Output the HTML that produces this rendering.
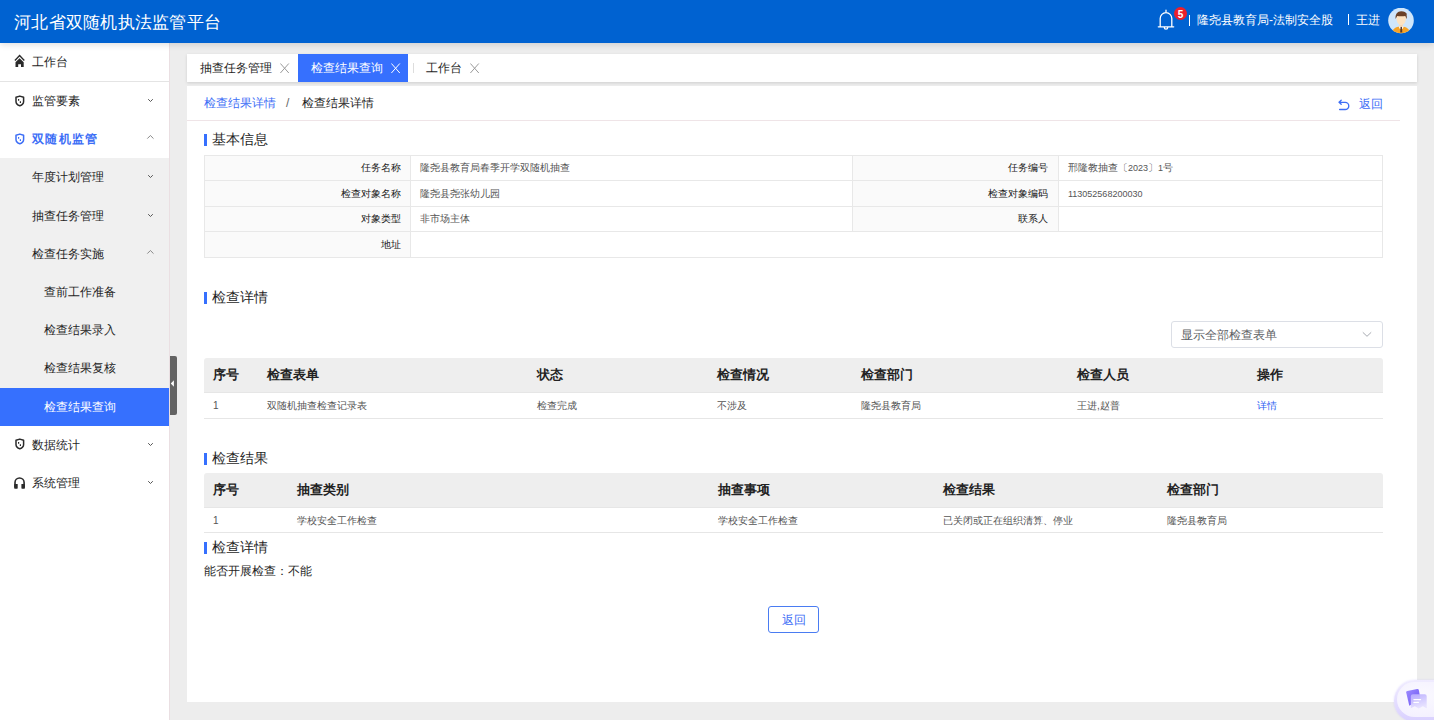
<!DOCTYPE html>
<html><head><meta charset="utf-8">
<style>
*{box-sizing:border-box;margin:0;padding:0}
html,body{width:1434px;height:720px;overflow:hidden;background:#ededed;font-family:"Liberation Sans",sans-serif;color:#333}
.a{position:absolute;white-space:nowrap}
#hdr{position:absolute;left:0;top:0;width:1434px;height:43px;background:#0062d1;color:#fff;z-index:5;box-shadow:0 2px 6px rgba(0,0,0,.12)}
#hdr .title{left:14px;top:13px;font-size:17px;line-height:20px;letter-spacing:0.26px}
#hdr .t12{font-size:12px;line-height:16px;top:12px}
#side{position:absolute;left:0;top:43px;width:170px;height:677px;background:#fff;border-right:1px solid #eadfe2}
.mi{position:absolute;left:0;width:169px;height:38.25px;font-size:12px;color:#1f1f1f}
.mi .t{position:absolute;left:32px;top:11px;line-height:16px;white-space:nowrap}
.mi.sub{background:#f0f0f0}
.mi.sub2 .t{left:44px}
.mi.act{background:#3670fe;color:#fff}
.chev{position:absolute;left:147px;top:16px}
.ico{position:absolute;left:14px;top:13px}
#tabs{position:absolute;left:187px;top:54px;width:1230px;height:28px;background:#fff;box-shadow:0 1px 3px rgba(0,0,0,.13)}
.tab{position:absolute;top:0;height:28px;font-size:12px;color:#1f1f1f}
.tab .t{position:absolute;top:6px;line-height:16px;white-space:nowrap}
.tab .x{position:absolute;top:9px}
#card{position:absolute;left:187px;top:86px;width:1230px;height:616px;background:#fff}
.sec{position:absolute;font-size:14px;line-height:18px;white-space:nowrap;color:#1f1f1f}
.sec i{position:absolute;left:-8px;top:4px;width:3px;height:12px;background:#3670fe}
.kv{position:absolute;left:204px;top:155px;width:1179px;height:103px;border:1px solid #e8e8e8;background:#fff}
.kv .row{position:absolute;left:0;width:1177px;border-top:1px solid #e8e8e8}
.kv .lb{position:absolute;top:0;height:100%;background:#fafafa;border-right:1px solid #e8e8e8}
.kv .txt{position:absolute;font-size:10px;line-height:12px;white-space:nowrap}
.grid{position:absolute;left:204px;width:1179px}
.grid .hd{position:absolute;left:0;top:0;width:1179px;height:34.5px;background:#eeeeee;border-radius:3px 3px 0 0;border-bottom:1px solid #e6e6e6}
.grid .hd span{position:absolute;top:9px;font-size:13px;line-height:16px;font-weight:bold;color:#222;white-space:nowrap}
.grid .bd{position:absolute;left:0;top:34.5px;width:1179px;height:26px;border-bottom:1px solid #e6e6e6}
.grid .bd span{position:absolute;top:7px;font-size:10px;line-height:12px;color:#555;white-space:nowrap}
.kt{font-size:10px;line-height:12px}
.dg{font-size:9px}
.kt.lb{color:#1a1a1a}.kt.vl{color:#555}
</style></head><body>
<div id="hdr">
  <div class="a title">河北省双随机执法监管平台</div>
  <svg class="a" style="left:1157px;top:9px" width="18" height="22" viewBox="0 0 18 22"><path d="M9 1.2v1.6M3.2 17.5V9.5a5.8 5.8 0 0 1 11.6 0v8M1.3 17.8h15.4M7.3 18.5a1.7 1.7 0 0 0 3.4 0" fill="none" stroke="#fff" stroke-width="1.3" stroke-linecap="round"/></svg>
  <div class="a" style="left:1174px;top:7px;width:13px;height:13px;border-radius:50%;background:#ec1f2b;color:#fff;font-size:10px;line-height:15px;text-align:center;font-weight:bold">5</div>
  <div class="a" style="left:1189px;top:15px;width:1px;height:11px;background:#fff"></div>
  <div class="a t12" style="left:1197px">隆尧县教育局-法制安全股</div>
  <div class="a" style="left:1348px;top:14px;width:1px;height:11px;background:#fff"></div>
  <div class="a t12" style="left:1356px">王进</div>
  <svg class="a" style="left:1388px;top:8px" width="26" height="26" viewBox="0 0 26 26"><defs><clipPath id="cp"><circle cx="13" cy="12.5" r="12.8"/></clipPath></defs><circle cx="13" cy="12.5" r="12.8" fill="#cfe6fb"/><g clip-path="url(#cp)"><path d="M3.8 26C4 21 7.5 18.4 13 18.4S22 21 22.2 26Z" fill="#f6a326"/><path d="M10.6 18.2H15.8L14.6 21H11.8Z" fill="#fff"/><path d="M12.5 18.8H14L14.3 24.5H12.2Z" fill="#5b3a29"/><rect x="11.4" y="15" width="3.4" height="3.6" fill="#f8d6b0"/><path d="M8.6 10.5C8.6 6.5 10.5 5.8 13.2 5.8S17.9 6.5 17.9 10.5C17.9 14.6 15.8 17 13.2 17S8.6 14.6 8.6 10.5Z" fill="#fde3c1"/><path d="M7.6 11C7 6 9.5 3.2 13.2 3.2C16.2 3.2 18 4.3 19.1 6.2C18.6 6.3 18.4 6.5 18.6 7.2C19 8.6 18.8 10 18.4 11C18 9.5 17.7 8.5 17.3 7.9C15 8.4 11.5 8.4 9.2 7.9C8.6 8.8 8.2 10 7.6 11Z" fill="#6b4126"/></g></svg>
</div>

<div id="side">
  <div class="mi" style="top:0;height:39px;border-bottom:1px solid #e4e4e4"><svg class="a" style="left:14px;top:11px" width="12" height="14" viewBox="0 0 12 14"><path d="M0.9 6.4L5.6 1.6L10.3 6.4" fill="none" stroke="#2a2a2a" stroke-width="1.4"/><path d="M1.5 8.2L5.6 4.2L9.7 8.2V13H7V10.3H4.2V13H1.5Z" fill="#2a2a2a"/></svg><span class="t">工作台</span></div>
  <div class="mi" style="top:39.00px"><svg class="a" style="left:15px;top:12.5px" width="10" height="12" viewBox="0 0 10 12"><path d="M1 2.3L4.8 1.1L8.6 2.3V6.4C8.6 8.7 6.8 10 4.8 10.7C2.8 10 1 8.7 1 6.4Z" fill="none" stroke="#2a2a2a" stroke-width="1.5" stroke-linejoin="round"/><path d="M3.6 4v1.7M5.4 6.2v1.8" stroke="#2a2a2a" stroke-width="1.2"/></svg><span class="t">监管要素</span><svg class="a" style="left:147px;top:16px" width="8" height="5" viewBox="0 0 8 5"><path d="M1.2 1.2L3.5 3.5L5.8 1.2" fill="none" stroke="#555" stroke-width="1"/></svg></div>
  <div class="mi" style="top:77.20px;color:#3d6ef6;font-weight:bold;letter-spacing:1.35px"><svg class="a" style="left:15px;top:12.5px" width="10" height="12" viewBox="0 0 10 12"><path d="M1 2.3L4.8 1.1L8.6 2.3V6.4C8.6 8.7 6.8 10 4.8 10.7C2.8 10 1 8.7 1 6.4Z" fill="none" stroke="#3d6ef6" stroke-width="1.5" stroke-linejoin="round"/><path d="M3.6 4v1.7M5.4 6.2v1.8" stroke="#3d6ef6" stroke-width="1.2"/></svg><span class="t">双随机监管</span><svg class="a" style="left:146px;top:14px" width="10" height="6" viewBox="0 0 10 6"><path d="M1.3 4.6L4.4 1.5L7.5 4.6" fill="none" stroke="#888" stroke-width="1"/></svg></div>
  <div class="mi sub" style="top:115.40px"><span class="t">年度计划管理</span><svg class="a" style="left:147px;top:16px" width="8" height="5" viewBox="0 0 8 5"><path d="M1.2 1.2L3.5 3.5L5.8 1.2" fill="none" stroke="#555" stroke-width="1"/></svg></div>
  <div class="mi sub" style="top:153.60px"><span class="t">抽查任务管理</span><svg class="a" style="left:147px;top:16px" width="8" height="5" viewBox="0 0 8 5"><path d="M1.2 1.2L3.5 3.5L5.8 1.2" fill="none" stroke="#555" stroke-width="1"/></svg></div>
  <div class="mi sub" style="top:191.80px"><span class="t">检查任务实施</span><svg class="a" style="left:146px;top:14px" width="10" height="6" viewBox="0 0 10 6"><path d="M1.3 4.6L4.4 1.5L7.5 4.6" fill="none" stroke="#888" stroke-width="1"/></svg></div>
  <div class="mi sub sub2" style="top:230.00px"><span class="t">查前工作准备</span></div>
  <div class="mi sub sub2" style="top:268.20px"><span class="t">检查结果录入</span></div>
  <div class="mi sub sub2" style="top:306.40px"><span class="t">检查结果复核</span></div>
  <div class="mi sub2 act" style="top:344.60px"><span class="t">检查结果查询</span></div>
  <div class="mi" style="top:382.80px"><svg class="a" style="left:15px;top:12.5px" width="10" height="12" viewBox="0 0 10 12"><path d="M1 2.3L4.8 1.1L8.6 2.3V6.4C8.6 8.7 6.8 10 4.8 10.7C2.8 10 1 8.7 1 6.4Z" fill="none" stroke="#2a2a2a" stroke-width="1.5" stroke-linejoin="round"/><path d="M3.6 4v1.7M5.4 6.2v1.8" stroke="#2a2a2a" stroke-width="1.2"/></svg><span class="t">数据统计</span><svg class="a" style="left:147px;top:16px" width="8" height="5" viewBox="0 0 8 5"><path d="M1.2 1.2L3.5 3.5L5.8 1.2" fill="none" stroke="#555" stroke-width="1"/></svg></div>
  <div class="mi" style="top:421.00px"><svg class="a" style="left:14px;top:12px" width="12" height="14" viewBox="0 0 12 14"><path d="M1 11.5V6.6A4.55 4.55 0 0 1 10.1 6.6V11.5" fill="none" stroke="#2a2a2a" stroke-width="1.6"/><rect x="0.2" y="8" width="3.5" height="4.7" rx="0.6" fill="#2a2a2a"/><rect x="7.4" y="8" width="3.5" height="4.7" rx="0.6" fill="#2a2a2a"/></svg><span class="t">系统管理</span><svg class="a" style="left:147px;top:16px" width="8" height="5" viewBox="0 0 8 5"><path d="M1.2 1.2L3.5 3.5L5.8 1.2" fill="none" stroke="#555" stroke-width="1"/></svg></div>
</div>

<div id="tabs">
  <div class="tab" style="left:0;width:111px"><span class="t" style="left:13px">抽查任务管理</span><svg class="a" style="left:93px;top:8.5px" width="10" height="11" viewBox="0 0 10 11"><path d="M0.4 0.5L8.8 10M8.8 0.5L0.4 10" stroke="#9a9a9a" stroke-width="1"/></svg></div>
  <div class="tab" style="left:111px;width:110px;background:#3670fe;color:#fff"><span class="t" style="left:13px">检查结果查询</span><svg class="a" style="left:93px;top:8.5px" width="10" height="11" viewBox="0 0 10 11"><path d="M0.4 0.5L8.8 10M8.8 0.5L0.4 10" stroke="#ffffff" stroke-width="1"/></svg></div>
  <div class="a" style="left:226px;top:9px;width:1px;height:10px;background:#ddd"></div>
  <div class="tab" style="left:226px;width:80px"><span class="t" style="left:13px">工作台</span><svg class="a" style="left:57px;top:8.5px" width="10" height="11" viewBox="0 0 10 11"><path d="M0.4 0.5L8.8 10M8.8 0.5L0.4 10" stroke="#9a9a9a" stroke-width="1"/></svg></div>
</div>

<div id="card"></div>

<!-- breadcrumb -->
<div class="a" style="left:204px;top:95px;font-size:12px;line-height:16px;color:#3d6ef6">检查结果详情</div>
<div class="a" style="left:286px;top:95px;font-size:12px;line-height:16px;color:#666">/</div>
<div class="a" style="left:302px;top:95px;font-size:12px;line-height:16px;color:#1f1f1f">检查结果详情</div>
<div class="a" style="left:1359px;top:96px;font-size:12px;line-height:16px;color:#3d6ef6">返回</div>
<svg class="a" style="left:1334px;top:94px" width="20" height="20" viewBox="0 0 20 20"><path d="M5 8.3H11.2A3.6 3.6 0 0 1 11.2 15.5H5.6M7.2 6.3L5 8.3L7.2 10.3" fill="none" stroke="#3d6ef6" stroke-width="1.3" stroke-linejoin="round" stroke-linecap="round"/></svg>
<div class="a" style="left:187px;top:120px;width:1213px;height:1px;background:#efe4e7"></div>

<div class="sec" style="left:212px;top:130px"><i></i>基本信息</div>

<div class="kv">
  <div class="lb" style="left:0;width:206px"></div>
  <div class="lb" style="left:647px;width:207px;height:75px"></div>
  <div class="a" style="left:647px;top:0;width:1px;height:75px;background:#e8e8e8"></div>
  <div class="row" style="top:24px"></div>
  <div class="row" style="top:49.5px"></div>
  <div class="row" style="top:75px"></div>
</div>


<div class="a kt lb" style="right:1033px;top:162px">任务名称</div>
<div class="a kt vl" style="left:420px;top:162px">隆尧县教育局春季开学双随机抽查</div>
<div class="a kt lb" style="right:386px;top:162px">任务编号</div>
<div class="a kt vl" style="left:1068px;top:162px">邢隆教抽查〔<span class="dg">2023</span>〕<span class="dg">1</span>号</div>
<div class="a kt lb" style="right:1033px;top:187.5px">检查对象名称</div>
<div class="a kt vl" style="left:420px;top:187.5px">隆尧县尧张幼儿园</div>
<div class="a kt lb" style="right:386px;top:187.5px">检查对象编码</div>
<div class="a kt vl" style="left:1068px;top:187.5px"><span class="dg">113052568200030</span></div>
<div class="a kt lb" style="right:1033px;top:213px">对象类型</div>
<div class="a kt vl" style="left:420px;top:213px">非市场主体</div>
<div class="a kt lb" style="right:386px;top:213px">联系人</div>
<div class="a kt lb" style="right:1033px;top:238.5px">地址</div>

<div class="sec" style="left:212px;top:288px"><i></i>检查详情</div>
<div class="sec" style="left:212px;top:449px"><i></i>检查结果</div>
<div class="sec" style="left:212px;top:538px"><i></i>检查详情</div>
<div class="a" style="left:204px;top:563px;font-size:12px;line-height:16px;color:#1f1f1f">能否开展检查：不能</div>

<div class="a" style="left:1171px;top:321px;width:212px;height:27px;border:1px solid #dcdfe6;border-radius:3px;background:#fff"></div>
<div class="a" style="left:1181px;top:327px;font-size:12px;line-height:16px;color:#606266">显示全部检查表单</div>
<svg class="a" style="left:1361px;top:330px" width="12" height="9" viewBox="0 0 12 9"><path d="M1.8 2.3L6 6.3L10.2 2.3" fill="none" stroke="#a8abb2" stroke-width="1"/></svg>
<div class="grid" style="top:358px">
  <div class="hd">
    <span style="left:9px">序号</span><span style="left:63px">检查表单</span><span style="left:333px">状态</span><span style="left:513px">检查情况</span><span style="left:657px">检查部门</span><span style="left:873px">检查人员</span><span style="left:1053px">操作</span>
  </div>
  <div class="bd">
    <span style="left:9px">1</span><span style="left:63px">双随机抽查检查记录表</span><span style="left:333px">检查完成</span><span style="left:513px">不涉及</span><span style="left:657px">隆尧县教育局</span><span style="left:873px">王进,赵普</span><span style="left:1053px;color:#2d5ef2">详情</span>
  </div>
</div>

<div class="grid" style="top:473px">
  <div class="hd">
    <span style="left:9px">序号</span><span style="left:93px">抽查类别</span><span style="left:514px">抽查事项</span><span style="left:739px">检查结果</span><span style="left:963px">检查部门</span>
  </div>
  <div class="bd" style="height:25px">
    <span style="left:9px">1</span><span style="left:93px">学校安全工作检查</span><span style="left:514px">学校安全工作检查</span><span style="left:739px">已关闭或正在组织清算、停业</span><span style="left:963px">隆尧县教育局</span>
  </div>
</div>

<div class="a" style="left:768px;top:606px;width:51px;height:27px;border:1px solid #4a7cf2;border-radius:3px;font-size:12px;line-height:16px;color:#3d6ef6;padding:5px 0 0 13px">返回</div>


<div class="a" style="left:170px;top:356px;width:7px;height:59px;background:#636363;border-radius:0 2px 2px 0"></div>
<svg class="a" style="left:170px;top:379px" width="5" height="9" viewBox="0 0 5 9"><path d="M0.8 4.5L3.9 1.2V7.8Z" fill="#fff"/></svg>
<div class="a" style="left:1394px;top:680px;width:60px;height:42px;border-radius:21px 0 0 21px;background:linear-gradient(180deg,#f0ecff,#d9d0ff);box-shadow:0 0 2px rgba(160,140,255,.3)"></div>
<div class="a" style="left:1397px;top:682px;width:60px;height:35px;border-radius:18px 0 0 18px;background:radial-gradient(ellipse at 40% 40%,#fbfaff 0,#f4f1ff 70%,#ece7ff 100%)"></div>
<svg class="a" style="left:1400px;top:684px" width="34" height="30" viewBox="0 0 34 30"><defs><linearGradient id="g1" x1="0" y1="0" x2="1" y2="1"><stop offset="0" stop-color="#9d8cff"/><stop offset="1" stop-color="#6a52f2"/></linearGradient><linearGradient id="g2" x1="0" y1="0" x2="0.3" y2="1"><stop offset="0" stop-color="#b9adff"/><stop offset="1" stop-color="#e6e1ff"/></linearGradient></defs><path d="M6.2 8.6Q5.9 7.2 7.3 6.9L17.2 5.1Q18.6 4.9 18.9 6.3L20.5 15.5L9.3 21.8Z" fill="url(#g1)"/><path d="M10.8 12.2Q10.8 10.2 12.8 10.2H24.7Q26.7 10.2 26.7 12.2V24.3L22.8 22.3L18.8 24.6L14.8 22.3L10.8 24.3Z" fill="url(#g2)" opacity=".93"/><path d="M13.9 15.6H20.6M13.9 18.4H18.4" stroke="#fff" stroke-width="1.2" stroke-linecap="round"/></svg>
</body></html>
